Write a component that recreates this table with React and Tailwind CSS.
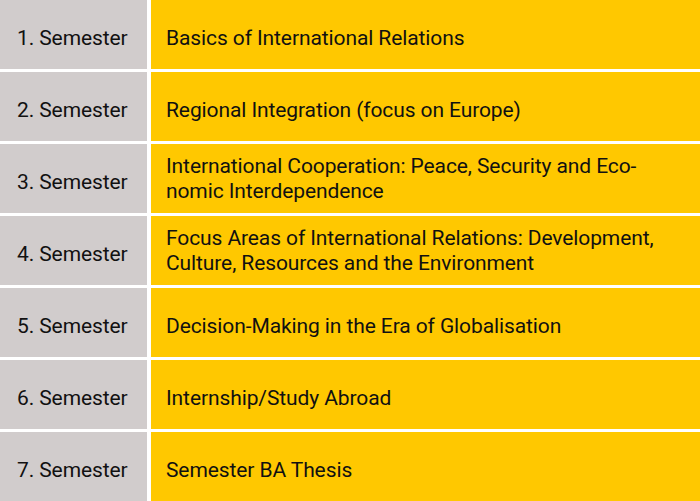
export default function App() {
  const rows = [
    ["1. Semester", ["Basics of International Relations"]],
    ["2. Semester", ["Regional Integration (focus on Europe)"]],
    ["3. Semester", ["International Cooperation: Peace, Security and Eco-", "nomic Interdependence"]],
    ["4. Semester", ["Focus Areas of International Relations: Development,", "Culture, Resources and the Environment"]],
    ["5. Semester", ["Decision-Making in the Era of Globalisation"]],
    ["6. Semester", ["Internship/Study Abroad"]],
    ["7. Semester", ["Semester BA Thesis"]],
  ];
  return (
    <div className="w-[700px] h-[501px] bg-white flex flex-col gap-[3px] text-[#111] text-[21px] leading-[25px] tracking-[-0.1px]" style={{ fontFamily: "Roboto, sans-serif" }}>
      {rows.map(([sem, lines]) => (
        <div key={sem} className="flex h-[69px] gap-[4px]">
          <div className="w-[147px] bg-[#d1cccc] flex items-center pl-[17px] pt-[8px]">{sem}</div>
          <div className={"flex-1 bg-[#ffc800] flex flex-col justify-center pl-[15px] " + (lines.length === 1 ? "pt-[8px]" : "pt-0")}>
            {lines.map((l) => (
              <div key={l} className="whitespace-nowrap">{l}</div>
            ))}
          </div>
        </div>
      ))}
    </div>
  );
}
